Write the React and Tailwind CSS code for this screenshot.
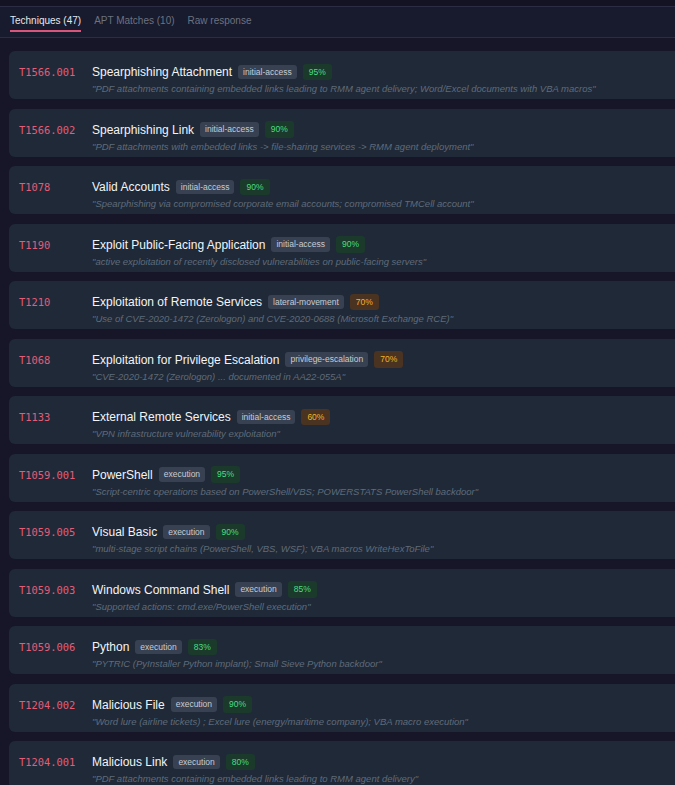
import React from 'react';

const TECHNIQUES = [
  { id: 'T1566.001', name: 'Spearphishing Attachment', tactic: 'initial-access', conf: 95, quote: 'PDF attachments containing embedded links leading to RMM agent delivery; Word/Excel documents with VBA macros' },
  { id: 'T1566.002', name: 'Spearphishing Link', tactic: 'initial-access', conf: 90, quote: 'PDF attachments with embedded links -> file-sharing services -> RMM agent deployment' },
  { id: 'T1078', name: 'Valid Accounts', tactic: 'initial-access', conf: 90, quote: 'Spearphishing via compromised corporate email accounts; compromised TMCell account' },
  { id: 'T1190', name: 'Exploit Public-Facing Application', tactic: 'initial-access', conf: 90, quote: 'active exploitation of recently disclosed vulnerabilities on public-facing servers' },
  { id: 'T1210', name: 'Exploitation of Remote Services', tactic: 'lateral-movement', conf: 70, quote: 'Use of CVE-2020-1472 (Zerologon) and CVE-2020-0688 (Microsoft Exchange RCE)' },
  { id: 'T1068', name: 'Exploitation for Privilege Escalation', tactic: 'privilege-escalation', conf: 70, quote: 'CVE-2020-1472 (Zerologon) ... documented in AA22-055A' },
  { id: 'T1133', name: 'External Remote Services', tactic: 'initial-access', conf: 60, quote: 'VPN infrastructure vulnerability exploitation' },
  { id: 'T1059.001', name: 'PowerShell', tactic: 'execution', conf: 95, quote: 'Script-centric operations based on PowerShell/VBS; POWERSTATS PowerShell backdoor' },
  { id: 'T1059.005', name: 'Visual Basic', tactic: 'execution', conf: 90, quote: 'multi-stage script chains (PowerShell, VBS, WSF); VBA macros WriteHexToFile' },
  { id: 'T1059.003', name: 'Windows Command Shell', tactic: 'execution', conf: 85, quote: 'Supported actions: cmd.exe/PowerShell execution' },
  { id: 'T1059.006', name: 'Python', tactic: 'execution', conf: 83, quote: 'PYTRIC (PyInstaller Python implant); Small Sieve Python backdoor' },
  { id: 'T1204.002', name: 'Malicious File', tactic: 'execution', conf: 90, quote: 'Word lure (airline tickets) ; Excel lure (energy/maritime company); VBA macro execution' },
  { id: 'T1204.001', name: 'Malicious Link', tactic: 'execution', conf: 80, quote: 'PDF attachments containing embedded links leading to RMM agent delivery' },
];

const ConfBadge = ({ value }) => {
  const high = value >= 80;
  return (
    <span
      className={
        high
          ? 'text-[8.5px] leading-none px-[6px] py-[4px] rounded-[3px] bg-[#1b3a2c] text-[#4ade80]'
          : 'text-[8.5px] leading-none px-[6px] py-[4px] rounded-[3px] bg-[#4a3320] text-[#f0b429]'
      }
    >
      {value}%
    </span>
  );
};

const TechniqueCard = ({ t }) => (
  <div className="flex h-[48px] rounded-[6px] bg-[#1f2937] pt-[13px]">
    <div className="w-[83px] pl-[10px] font-['DejaVu_Sans_Mono',monospace] text-[10.4px] leading-[16px] text-[#e35d78]">
      {t.id}
    </div>
    <div className="flex flex-col">
      <div className="flex items-center gap-[6px] h-[16px]">
        <span className="text-[12px] font-medium text-[#f3f4f6]">{t.name}</span>
        <span className="text-[8.5px] leading-none px-[5px] py-[3px] rounded-[3px] bg-[#374151] text-[#c7ccd4]">
          {t.tactic}
        </span>
        <ConfBadge value={t.conf} />
      </div>
      <div className="mt-[2px] text-[9.5px] italic text-[#5f6b7a] whitespace-nowrap">"{t.quote}"</div>
    </div>
  </div>
);

export default function App() {
  return (
    <div className="min-h-[785px] bg-[#161628] font-['Liberation_Sans',Arial,sans-serif] overflow-hidden">
      <div className="h-[6px] bg-[#131324]" />
      <div className="border-t border-[#2c2c44] border-b h-[32px] flex items-start gap-[13px] px-[10px] bg-[#181a2d]">
        <div className="h-[25px] pt-[6px] border-b-2 border-[#d9557a] text-[10px] text-[#e5e7eb]">
          Techniques (47)
        </div>
        <div className="h-[25px] pt-[6px] text-[10px] text-[#6b7280]">APT Matches (10)</div>
        <div className="h-[25px] pt-[6px] text-[10px] text-[#6b7280]">Raw response</div>
      </div>
      <div className="flex flex-col gap-[9.5px] pl-[9px] -mr-[20px] pt-[13px]">
        {TECHNIQUES.map((t) => (
          <TechniqueCard key={t.id} t={t} />
        ))}
      </div>
    </div>
  );
}
